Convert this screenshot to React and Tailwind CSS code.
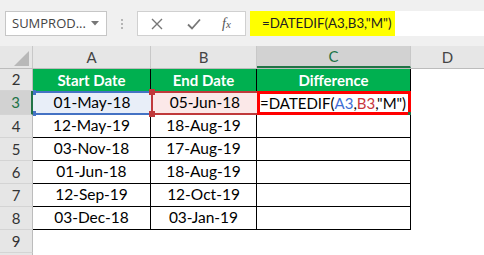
const cellFont = { fontFamily: "Lato, 'Liberation Sans', sans-serif" };

const rows = [
  ["12-May-19", "18-Aug-19"],
  ["03-Nov-18", "17-Aug-19"],
  ["01-Jun-18", "18-Aug-19"],
  ["12-Sep-19", "12-Oct-19"],
  ["03-Dec-18", "03-Jan-19"],
];

function RowHead({ n, selected, h }) {
  return (
    <div
      className={`w-[33px] shrink-0 flex items-center justify-center text-[15px] text-[#333] border-b border-[#d4d4d4] ${
        selected ? "bg-[#d2d2d2] border-r-2 border-r-[#217346] text-[#217346]" : "bg-[#e6e6e6] border-r border-r-[#bcbcbc]"
      } ${h}`}
    >
      {n}
    </div>
  );
}

function Toolbar() {
  return (
    <div className="h-[46px] bg-[#f0f0f0] flex items-start pt-[11px] pl-[5px]">
      <div className="w-[102px] h-[25px] bg-white border border-[#c6c6c6] flex items-center pl-[6px] pr-[7px] justify-between">
        <span className="text-[13px] text-[#444]" style={{ fontFamily: "'Open Sans', sans-serif" }}>
          SUMPROD...
        </span>
        <svg width="8" height="5" viewBox="0 0 8 5">
          <path d="M0 0 L8 0 L4 4.5 Z" fill="#777" />
        </svg>
      </div>
      <div className="w-[30px] h-[25px] flex flex-col items-center justify-center gap-[2px]">
        <div className="w-[2px] h-[2px] bg-[#b5b5b5]" />
        <div className="w-[2px] h-[2px] bg-[#b5b5b5]" />
        <div className="w-[2px] h-[2px] bg-[#b5b5b5]" />
      </div>
      <div className="w-[109px] h-[25px] bg-white border border-[#d0d0d0] flex items-center">
        <svg width="12" height="12" viewBox="0 0 12 12" className="ml-[13px]">
          <path d="M1 1 L11 11 M11 1 L1 11" stroke="#777" strokeWidth="1.4" />
        </svg>
        <svg width="14" height="12" viewBox="0 0 14 12" className="ml-[24px]">
          <path d="M1 6.5 L5 10.5 L13 1.5" stroke="#777" strokeWidth="1.8" fill="none" />
        </svg>
        <span
          className="ml-[21px] text-[14px] italic text-[#555]"
          style={{ fontFamily: "'Liberation Serif', serif" }}
        >
          f<span className="text-[11px]">x</span>
        </span>
      </div>
      <div className="ml-[4px] flex-1 h-[25px] bg-white flex items-center">
        <div className="w-[145px] h-full bg-[#ffff00] flex items-center pl-[12px]">
          <span className="text-[13.3px] text-[#222]" style={cellFont}>
            =DATEDIF(A3,B3,"M")
          </span>
        </div>
      </div>
    </div>
  );
}

function ColHeader() {
  return (
    <div className="h-[23px] flex bg-[#e6e6e6] text-[15px] text-[#444] border-b border-[#bcbcbc]" style={cellFont}>
      <div className="w-[33px] shrink-0 border-r border-[#c8c8c8] flex items-end justify-end pr-[3px] pb-[2px]">
        <svg width="15" height="15" viewBox="0 0 15 15">
          <path d="M15 0 L15 15 L0 15 Z" fill="#b8b8b8" />
        </svg>
      </div>
      <div className="w-[118px] shrink-0 border-r border-[#c8c8c8] flex items-center justify-center">A</div>
      <div className="w-[106px] shrink-0 border-r border-[#c8c8c8] flex items-center justify-center">B</div>
      <div className="w-[154px] shrink-0 bg-[#d2d2d2] border-r border-[#c8c8c8] border-b-2 border-b-[#217346] flex items-center justify-center text-[#217346]">
        C
      </div>
      <div className="flex-1 flex items-center justify-center">D</div>
    </div>
  );
}

export default function App() {
  return (
    <div className="w-[484px] h-[255px] overflow-hidden bg-white" style={cellFont}>
      <Toolbar />
      <ColHeader />

      {/* row 2: headers */}
      <div className="flex h-[22px]">
        <RowHead n={2} h="h-[22px]" />
        <div className="w-[118px] shrink-0 bg-[#00b050] border-r border-black text-white font-bold text-[15px] flex items-center justify-center">
          Start Date
        </div>
        <div className="w-[106px] shrink-0 bg-[#00b050] border-r border-black text-white font-bold text-[15px] flex items-center justify-center">
          End Date
        </div>
        <div className="w-[154px] shrink-0 bg-[#00b050] border-r border-black text-white font-bold text-[15px] flex items-center justify-center">
          Difference
        </div>
      </div>

      {/* row 3: selected formula row */}
      <div className="flex h-[24px]">
        <RowHead n={3} selected h="h-[24px]" />
        <div className="relative w-[118px] shrink-0 bg-[#e8eef8] border-y-2 border-[#4472c4] text-[15.5px] text-black flex items-center justify-center">
          01-May-18
          <div className="absolute left-0 -top-[3px] w-[3px] h-[5px] bg-[#4472c4]" />
          <div className="absolute left-0 -bottom-[3px] w-[3px] h-[5px] bg-[#4472c4]" />
        </div>
        <div className="relative w-[106px] shrink-0 bg-[#fbe8e8] border-y-2 border-l-2 border-[#c0393b] text-[15.5px] text-black flex items-center justify-center">
          05-Jun-18
          <div className="absolute -left-[4px] -top-[4px] w-[6px] h-[6px] bg-[#c0393b]" />
          <div className="absolute -left-[4px] -bottom-[4px] w-[6px] h-[6px] bg-[#c0393b]" />
        </div>
        <div className="relative w-[154px] shrink-0 border-[3px] border-[#ff0000] bg-white text-[15px] text-black flex items-center whitespace-nowrap">
          =DATEDIF(<span className="text-[#3f6ed4]">A3</span>,<span className="text-[#c8363d]">B3</span>,"M")
          <div className="absolute -right-[3px] -bottom-[3px] w-[3px] h-[3px] bg-[#217346]" />
        </div>
      </div>

      {rows.map((r, i) => (
        <div key={i} className="flex h-[23px]">
          <RowHead n={i + 4} h="h-[23px]" />
          <div className="w-[118px] shrink-0 border-r border-b border-black text-[15.5px] text-black flex items-center justify-center">
            {r[0]}
          </div>
          <div className="w-[106px] shrink-0 border-r border-b border-black text-[15.5px] text-black flex items-center justify-center">
            {r[1]}
          </div>
          <div className="w-[154px] shrink-0 border-r border-b border-black" />
        </div>
      ))}

      <div className="flex h-[23px]">
        <RowHead n={9} h="h-[23px]" />
      </div>
      <div className="flex h-[23px]">
        <RowHead n="" h="h-[23px]" />
      </div>
    </div>
  );
}
